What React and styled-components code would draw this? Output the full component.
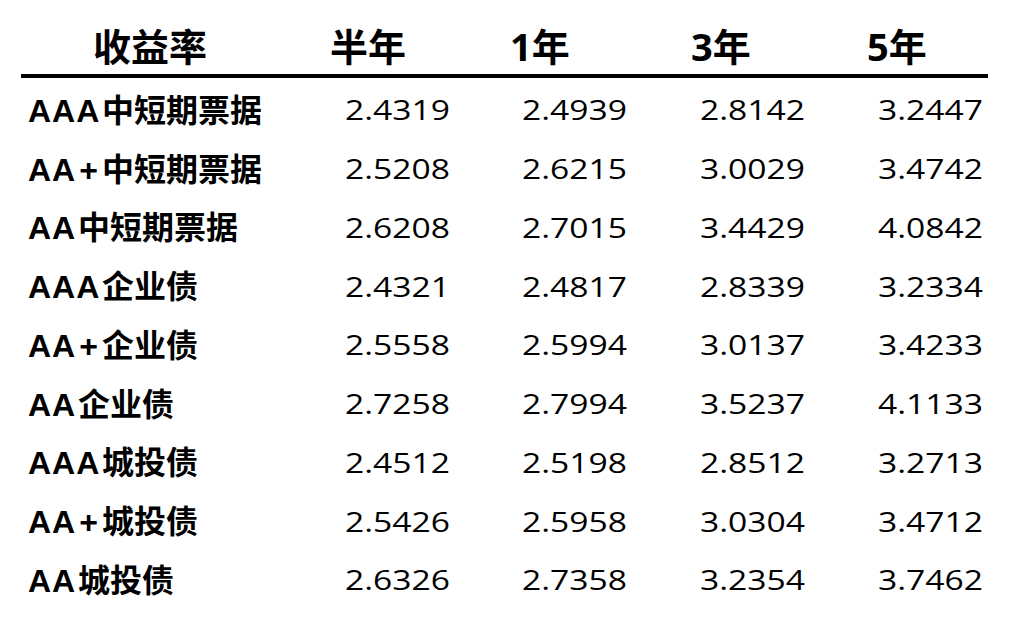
import React from "react";
import styled, { createGlobalStyle } from "styled-components";

const GlobalStyle = createGlobalStyle`
  body {
    margin: 0;
    background: #ffffff;
  }
`;

const Table = styled.div`
  margin-left: 21px;
  width: 967px;
  color: #000;
`;

const HeadRow = styled.div`
  display: grid;
  grid-template-columns: 324px 177px 178px 178px 110px;
  align-items: center;
  height: 78px;
  padding-top: 17px;
  box-sizing: border-box;
  border-bottom: 4px solid #000;
`;

const HeadCell = styled.div`
  font-family: "Open Sans", "Noto Sans CJK SC", sans-serif;
  font-size: 38px;
  font-weight: 700;
  line-height: 1;
  white-space: nowrap;
  margin-left: ${({ $shift }) => $shift || 0}px;
`;

const Body = styled.div`
  padding-top: 2px;
`;

const Row = styled.div`
  display: grid;
  grid-template-columns: 324px 177px 178px 178px 110px;
  align-items: center;
  height: 58.75px;
`;

const Label = styled.div`
  display: flex;
  align-items: baseline;
  padding-left: 7px;
  white-space: nowrap;
  font-weight: 700;
  line-height: 1;
`;

const Rating = styled.span`
  display: inline-block;
  width: ${({ $w }) => $w}px;
  font-family: "Liberation Sans", Arial, sans-serif;
  font-size: 32px;
  letter-spacing: 1px;
`;

const Plus = styled.span`
  margin-left: 3px;
`;

const Kind = styled.span`
  font-family: "Noto Sans CJK SC", sans-serif;
  font-size: 32px;
`;

const Value = styled.div`
  font-family: "Open Sans", sans-serif;
  font-size: 28px;
  font-weight: 400;
  line-height: 1;
  white-space: nowrap;
`;

// digits in the shot run a bit wider than Open Sans
const Wide = styled.span`
  display: inline-block;
  transform: scaleX(1.2);
  transform-origin: left center;
`;

const columns = [
  { title: "半年", shift: -15 },
  { title: "1年", shift: -12 },
  { title: "3年", shift: -9 },
  { title: "5年", shift: -11 },
];

const ratingWidth = { AAA: 74, "AA+": 74, AA: 50 };

const rows = [
  { rating: "AAA", kind: "中短期票据", values: ["2.4319", "2.4939", "2.8142", "3.2447"] },
  { rating: "AA+", kind: "中短期票据", values: ["2.5208", "2.6215", "3.0029", "3.4742"] },
  { rating: "AA", kind: "中短期票据", values: ["2.6208", "2.7015", "3.4429", "4.0842"] },
  { rating: "AAA", kind: "企业债", values: ["2.4321", "2.4817", "2.8339", "3.2334"] },
  { rating: "AA+", kind: "企业债", values: ["2.5558", "2.5994", "3.0137", "3.4233"] },
  { rating: "AA", kind: "企业债", values: ["2.7258", "2.7994", "3.5237", "4.1133"] },
  { rating: "AAA", kind: "城投债", values: ["2.4512", "2.5198", "2.8512", "3.2713"] },
  { rating: "AA+", kind: "城投债", values: ["2.5426", "2.5958", "3.0304", "3.4712"] },
  { rating: "AA", kind: "城投债", values: ["2.6326", "2.7358", "3.2354", "3.7462"] },
];

const RatingText = ({ rating }) => {
  if (rating.endsWith("+")) {
    return (
      <>
        {rating.slice(0, -1)}
        <Plus>+</Plus>
      </>
    );
  }
  return rating;
};

const App = () => {
  return (
    <>
      <GlobalStyle />
      <Table>
        <HeadRow>
          <HeadCell $shift={72}>收益率</HeadCell>
          {columns.map((c) => (
            <HeadCell key={c.title} $shift={c.shift}>
              {c.title}
            </HeadCell>
          ))}
        </HeadRow>
        <Body>
          {rows.map((r) => (
            <Row key={r.rating + r.kind}>
              <Label>
                <Rating $w={ratingWidth[r.rating]}>
                  <RatingText rating={r.rating} />
                </Rating>
                <Kind>{r.kind}</Kind>
              </Label>
              {r.values.map((v, i) => (
                <Value key={i}>
                  <Wide>{v}</Wide>
                </Value>
              ))}
            </Row>
          ))}
        </Body>
      </Table>
    </>
  );
};

export default App;
